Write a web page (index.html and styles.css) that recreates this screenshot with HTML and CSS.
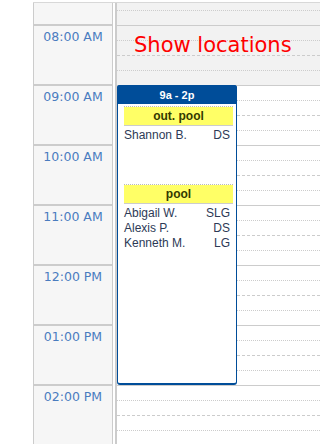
FILE: index.html
```html
<!DOCTYPE html>
<html lang="en">
<head>
  <meta charset="UTF-8">
  <meta name="viewport" content="width=device-width, initial-scale=1.0">
  <title>Day schedule</title>
  <link rel="stylesheet" href="styles.css">
</head>
<body>
  <div class="calendar">
    <div class="scroller">
      <div class="times">
        <div class="time"></div>
        <div class="time">08:00 AM</div>
        <div class="time">09:00 AM</div>
        <div class="time">10:00 AM</div>
        <div class="time">11:00 AM</div>
        <div class="time">12:00 PM</div>
        <div class="time">01:00 PM</div>
        <div class="time">02:00 PM</div>
      </div>

      <div class="divider"></div>

      <div class="day">
        <div class="hour off"><div class="slot q1"></div><div class="slot q2"></div><div class="slot q3"></div><div class="slot q4"></div></div>
        <div class="hour off"><div class="slot q1"></div><div class="slot q2"></div><div class="slot q3"></div><div class="slot q4"></div></div>
        <div class="hour"><div class="slot q1"></div><div class="slot q2"></div><div class="slot q3"></div><div class="slot q4"></div></div>
        <div class="hour"><div class="slot q1"></div><div class="slot q2"></div><div class="slot q3"></div><div class="slot q4"></div></div>
        <div class="hour"><div class="slot q1"></div><div class="slot q2"></div><div class="slot q3"></div><div class="slot q4"></div></div>
        <div class="hour"><div class="slot q1"></div><div class="slot q2"></div><div class="slot q3"></div><div class="slot q4"></div></div>
        <div class="hour"><div class="slot q1"></div><div class="slot q2"></div><div class="slot q3"></div><div class="slot q4"></div></div>
        <div class="hour"><div class="slot q1"></div><div class="slot q2"></div><div class="slot q3"></div><div class="slot q4"></div></div>

        <div class="event">
          <div class="event-head">9a - 2p</div>
          <div class="event-body">
            <div class="group">
              <div class="location">out. pool</div>
              <div class="member"><span>Shannon B.</span><span>DS</span></div>
            </div>
            <div class="group">
              <div class="location">pool</div>
              <div class="member"><span>Abigail W.</span><span>SLG</span></div>
              <div class="member"><span>Alexis P.</span><span>DS</span></div>
              <div class="member"><span>Kenneth M.</span><span>LG</span></div>
            </div>
          </div>
        </div>
      </div>
    </div>

    <a class="show-locations" href="#">Show locations</a>
  </div>
</body>
</html>
```

FILE: styles.css
```css
body {
  margin: 0;
  padding: 2px 0 0 33px;
  background: #fff;
  font-family: "Liberation Sans", Arial, sans-serif;
  overflow: hidden;
}
.calendar {
  position: relative;
  height: 442px;
  border-top: 1px solid #d8d8d8;
  overflow: hidden;
}
.scroller {
  display: flex;
  margin-top: -37px;
}
.times {
  width: 80px;
  flex: none;
  box-sizing: border-box;
  border-left: 1px solid #ccc;
  border-right: 1px solid #ccc;
  background: #f6f6f6;
}
.time {
  height: 60px;
  box-sizing: border-box;
  border-bottom: 2px solid #ccc;
  padding-top: 3px;
  text-align: center;
  font-family: "DejaVu Sans", Verdana, sans-serif;
  font-size: 12.5px;
  line-height: 15px;
  color: #4a7cbf;
}
.divider {
  flex: none;
  width: 2px;
  margin: 0 0 0 2px;
  background: #ccc;
}
.day {
  position: relative;
  flex: 1;
}
.hour.off {
  background: #f2f2f2;
}
.slot {
  height: 15px;
  box-sizing: border-box;
}
.q1, .q3 {
  border-bottom: 1px dotted #ccc;
}
.q2 {
  border-bottom: 1px dashed #ccc;
}
.q4 {
  border-bottom: 1px solid #ccc;
}
.event {
  position: absolute;
  top: 119px;
  left: 0;
  width: 120px;
  height: 300px;
  box-sizing: border-box;
  display: flex;
  flex-direction: column;
  background: #fff;
  border: 1px solid #004d99;
  border-bottom-width: 2px;
  border-radius: 3px;
}
.event-head {
  height: 19px;
  margin: -1px -1px 0;
  border-radius: 3px 3px 0 0;
  background: #004d99;
  color: #fff;
  text-align: center;
  font-size: 11px;
  font-weight: bold;
  line-height: 20px;
}
.event-body {
  padding: 2px 3px 0 6px;
}
.group {
  min-height: 77px;
  border-top: 1px dotted #bbb;
}
.location {
  height: 18px;
  margin-bottom: 2px;
  border-bottom: 1px solid #ccc;
  background: #ffff66;
  color: #333a00;
  text-align: center;
  font-size: 12px;
  font-weight: bold;
  line-height: 18px;
}
.member {
  display: flex;
  justify-content: space-between;
  padding-right: 3px;
  color: #2d3a56;
  font-size: 12px;
  line-height: 15px;
}
.show-locations {
  position: absolute;
  top: 30px;
  left: 101px;
  font-family: "DejaVu Sans", Verdana, sans-serif;
  font-size: 21px;
  line-height: 24px;
  color: #ff0000;
  text-decoration: none;
}
```
